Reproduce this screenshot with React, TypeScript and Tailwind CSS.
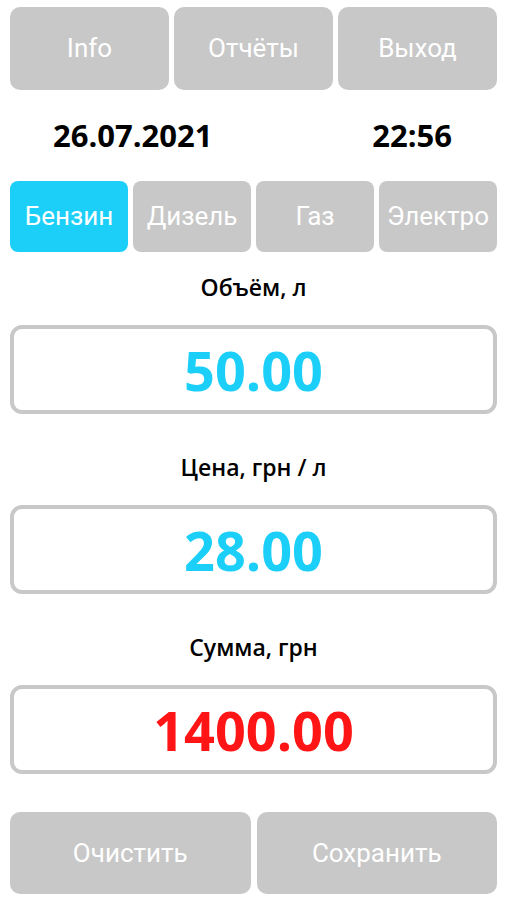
import React from "react";

const btn =
  "flex items-center justify-center rounded-[10px] bg-[#c8c8c8] text-white text-[26px] font-['Roboto',sans-serif]";

function Field({ label, value, color, top }: { label: string; value: string; color: string; top: string }) {
  return (
    <div className={top}>
      <div className="h-[24px] text-center text-[23px] leading-[24px] font-semibold text-black font-['Open_Sans',sans-serif]">
        {label}
      </div>
      <div className="mt-[26px] flex h-[89px] items-center justify-center rounded-[12px] border-4 border-[#c8c8c8] bg-white">
        <span className={`text-[54px] font-bold leading-none font-['Open_Sans',sans-serif] ${color}`}>{value}</span>
      </div>
    </div>
  );
}

export default function App() {
  return (
    <div className="min-h-[900px] w-[506px] bg-white pl-[10px] pr-[9px] pt-[7px]">
      <div className="grid h-[83px] grid-cols-3 gap-[5px]">
        <div className={btn}>Info</div>
        <div className={btn}>Отчёты</div>
        <div className={btn}>Выход</div>
      </div>

      <div className="flex h-[91px] items-center justify-between pl-[43px] pr-[45px] text-[31px] font-bold text-black font-['Open_Sans',sans-serif]">
        <span>26.07.2021</span>
        <span>22:56</span>
      </div>

      <div className="grid h-[71px] grid-cols-4 gap-[5px]">
        <div className={`${btn} !bg-[#1ccff8] !rounded-[8px]`}>Бензин</div>
        <div className={`${btn} !rounded-[8px]`}>Дизель</div>
        <div className={`${btn} !rounded-[8px]`}>Газ</div>
        <div className={`${btn} !rounded-[8px]`}>Электро</div>
      </div>

      <Field label="Объём, л" value="50.00" color="text-[#1ccff8]" top="mt-[23px]" />
      <Field label="Цена, грн / л" value="28.00" color="text-[#1ccff8]" top="mt-[41px]" />
      <Field label="Сумма, грн" value="1400.00" color="text-[#ff1515]" top="mt-[41px]" />

      <div className="mt-[38px] grid h-[82px] grid-cols-2 gap-[6px]">
        <div className={btn}>Очистить</div>
        <div className={btn}>Сохранить</div>
      </div>
    </div>
  );
}
